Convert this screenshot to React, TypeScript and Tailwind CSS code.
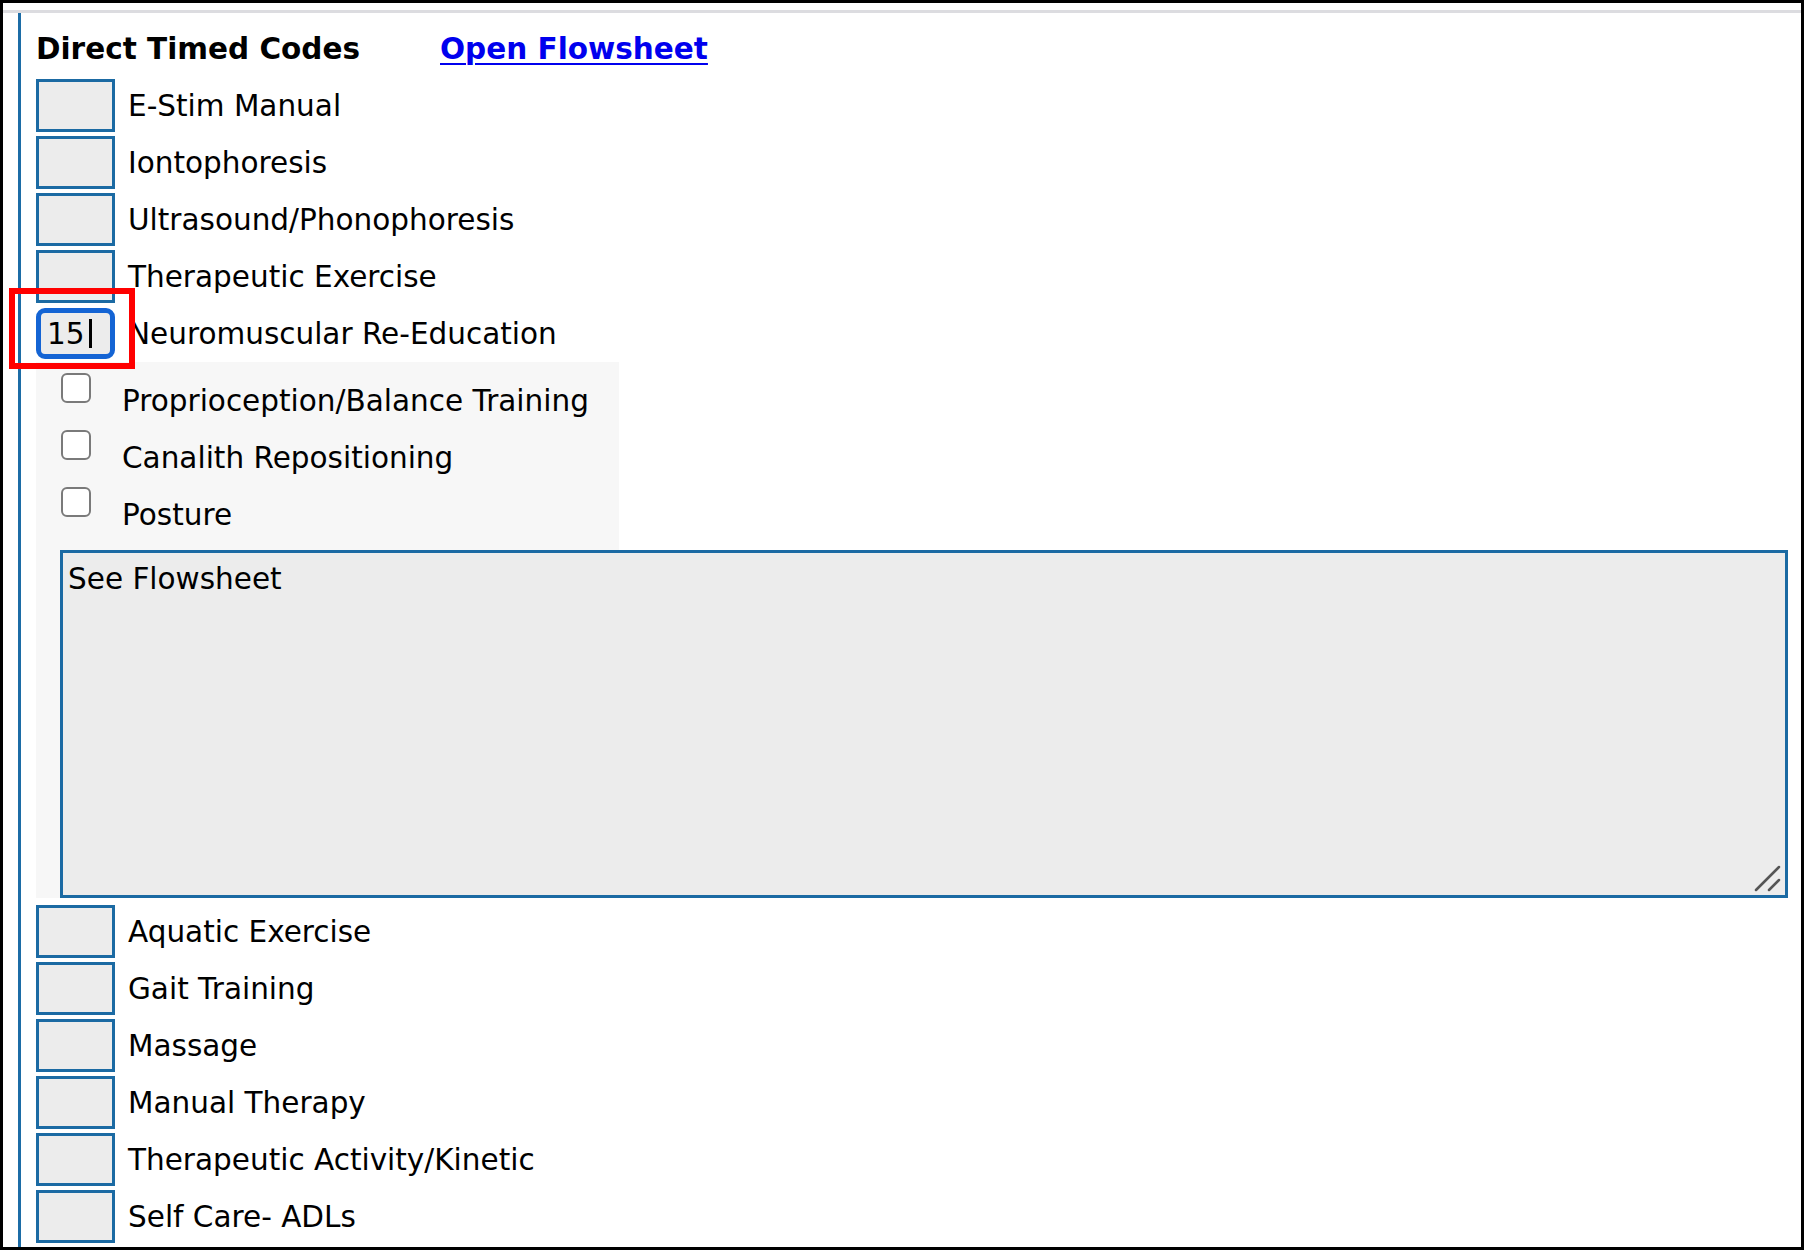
import React from 'react';

const topCodes = ['E-Stim Manual', 'Iontophoresis', 'Ultrasound/Phonophoresis', 'Therapeutic Exercise'];
const subItems = ['Proprioception/Balance Training', 'Canalith Repositioning', 'Posture'];
const bottomCodes = [
  'Aquatic Exercise',
  'Gait Training',
  'Massage',
  'Manual Therapy',
  'Therapeutic Activity/Kinetic',
  'Self Care- ADLs',
];

function MinuteBox() {
  return <div className="w-[79px] h-[53px] shrink-0 border-[3px] border-[#1b6aa3] bg-[#ececec]" />;
}

function CodeRow({ label }: { label: string }) {
  return (
    <div className="flex items-center">
      <MinuteBox />
      <span className="ml-[13px] leading-[36px]">{label}</span>
    </div>
  );
}

function SubCheck({ label }: { label: string }) {
  return (
    <div className="flex items-start h-[57px]">
      <div className="ml-[25px] mt-[11px] w-[30px] h-[30px] shrink-0 rounded-[6px] border-2 border-[#7a7a7a] bg-white" />
      <span className="ml-[31px] mt-[21px] leading-[36px]">{label}</span>
    </div>
  );
}

export default function App() {
  return (
    <div
      className="relative w-[1804px] h-[1250px] overflow-hidden bg-white border-[3px] border-black text-black text-[29.5px]"
      style={{ fontFamily: '"DejaVu Sans", Verdana, sans-serif' }}
    >
      <div className="mt-[7px] h-[3px] bg-[#dcdce0]" />
      <div className="flex h-full">
        <div className="ml-[15px] w-[3px] shrink-0 bg-[#1c6ca6]" />
        <div className="pl-[15px] flex-1">
          {/* header */}
          <div className="pt-[18px] mb-[12px] flex leading-[36px]">
            <span className="w-[404px] font-bold">Direct Timed Codes</span>
            <a href="#" className="font-bold text-[#0000ee] underline underline-offset-[4px] decoration-[2px]">
              Open Flowsheet
            </a>
          </div>

          <div className="flex flex-col gap-[4px]">
            {topCodes.map((c) => (
              <CodeRow key={c} label={c} />
            ))}
            {/* focused entry */}
            <div className="flex items-center h-[53px]">
              <div className="w-[79px] h-[51px] shrink-0 rounded-[9px] border-[5px] border-[#1464d4] bg-[#ececec] flex items-center pl-[6px]">
                <span className="leading-[36px]">15</span>
                <span className="ml-[4px] w-[3px] h-[29px] bg-black" />
              </div>
              <span className="ml-[13px] leading-[36px]">Neuromuscular Re-Education</span>
            </div>
          </div>

          {/* sub options */}
          <div className="mt-[2px] w-[583px] h-[536px] bg-[#f7f7f7]">
            {subItems.map((s) => (
              <SubCheck key={s} label={s} />
            ))}
            <div className="relative mt-[17px] ml-[24px] w-[1728px] h-[348px] border-[3px] border-[#1b6aa3] bg-[#ececec] px-[5px] pt-[8px] leading-[36px]">
              See Flowsheet
              <svg className="absolute right-[3px] bottom-[3px]" width="28" height="28" viewBox="0 0 28 28">
                <line x1="2" y1="26" x2="25" y2="3" stroke="#555" strokeWidth="2.5" strokeLinecap="round" />
                <line x1="15" y1="26" x2="25" y2="16" stroke="#555" strokeWidth="2.5" strokeLinecap="round" />
              </svg>
            </div>
          </div>

          <div className="mt-[7px] flex flex-col gap-[4px]">
            {bottomCodes.map((c) => (
              <CodeRow key={c} label={c} />
            ))}
          </div>
        </div>
      </div>

      {/* red highlight around focused field */}
      <div className="absolute left-[6px] top-[285px] w-[126px] h-[81px] border-[6px] border-[#ff0000]" />
    </div>
  );
}
